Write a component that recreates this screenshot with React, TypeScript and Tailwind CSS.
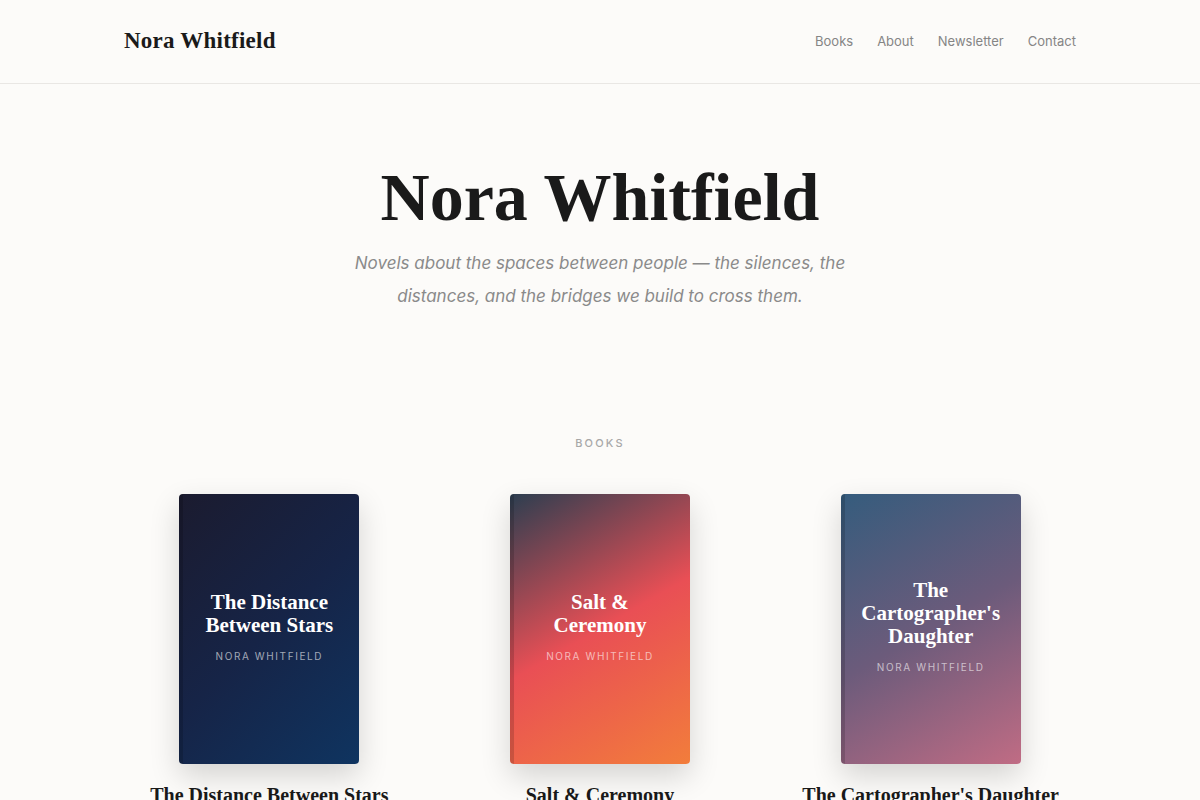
const serif = "font-['Liberation_Serif',serif]";
const sans = "font-['Inter','Roboto',sans-serif]";

const nav = ["Books", "About", "Newsletter", "Contact"];

const books = [
  {
    title: "The Distance Between Stars",
    cover: "bg-[linear-gradient(135deg,#1b1b2f_0%,#162447_50%,#0f3460_100%)]",
  },
  {
    title: "Salt & Ceremony",
    cover: "bg-[linear-gradient(150deg,#2c3e50_0%,#e94f55_50%,#f27d3b_100%)]",
  },
  {
    title: "The Cartographer's Daughter",
    cover: "bg-[linear-gradient(150deg,#355c7d_0%,#6c5b7b_50%,#c06c84_100%)]",
  },
];

function BookCard({ title, cover }: { title: string; cover: string }) {
  return (
    <div className="flex flex-col items-center">
      <div
        className={`relative flex h-[270px] w-[180px] flex-col items-center justify-center overflow-hidden rounded-[4px] px-5 pb-1 text-center shadow-[0_12px_30px_rgba(0,0,0,0.16)] ${cover}`}
      >
        <span className="absolute inset-y-0 left-0 w-[4px] bg-black/15" />
        <p className={`${serif} text-[21px] font-bold leading-[23px] text-white`}>{title}</p>
        <p className={`${sans} mt-3 text-[10px] uppercase tracking-[0.16em] text-white/60`}>Nora Whitfield</p>
      </div>
      <p className={`${serif} mt-[17px] text-[20px] font-bold leading-7 text-[#1a1a1a]`}>{title}</p>
    </div>
  );
}

export default function App() {
  return (
    <div className={`min-h-screen bg-[#fcfbf9] text-[#1a1a1a] ${sans}`}>
      <header className="border-b border-[#e9e7e4]">
        <div className="mx-auto flex h-[83px] max-w-[952px] items-center justify-between">
          <p className={`${serif} text-[23px] font-bold tracking-[0.01em]`}>Nora Whitfield</p>
          <nav className="flex items-center gap-[24px]">
            {nav.map((item) => (
              <a key={item} className="text-[13px] text-[#858585]">
                {item}
              </a>
            ))}
          </nav>
        </div>
      </header>

      <section className="flex flex-col items-center pt-[76px] text-center">
        <h1 className={`${serif} text-[68px] font-bold leading-[75px] text-[#1a1a1a]`}>Nora Whitfield</h1>
        <p className="mt-3 text-[17px] italic leading-[33px] text-[#8a8a8a]">
          Novels about the spaces between people — the silences, the
          <br />
          distances, and the bridges we build to cross them.
        </p>
      </section>

      <section className="mx-auto max-w-[952px] pt-[122px]">
        <p className="text-center text-[11px] font-medium uppercase leading-4 tracking-[0.2em] text-[#a8a8a8]">Books</p>
        <div className="mt-[43px] grid grid-cols-3 gap-10">
          {books.map((b) => (
            <BookCard key={b.title} {...b} />
          ))}
        </div>
      </section>
    </div>
  );
}
